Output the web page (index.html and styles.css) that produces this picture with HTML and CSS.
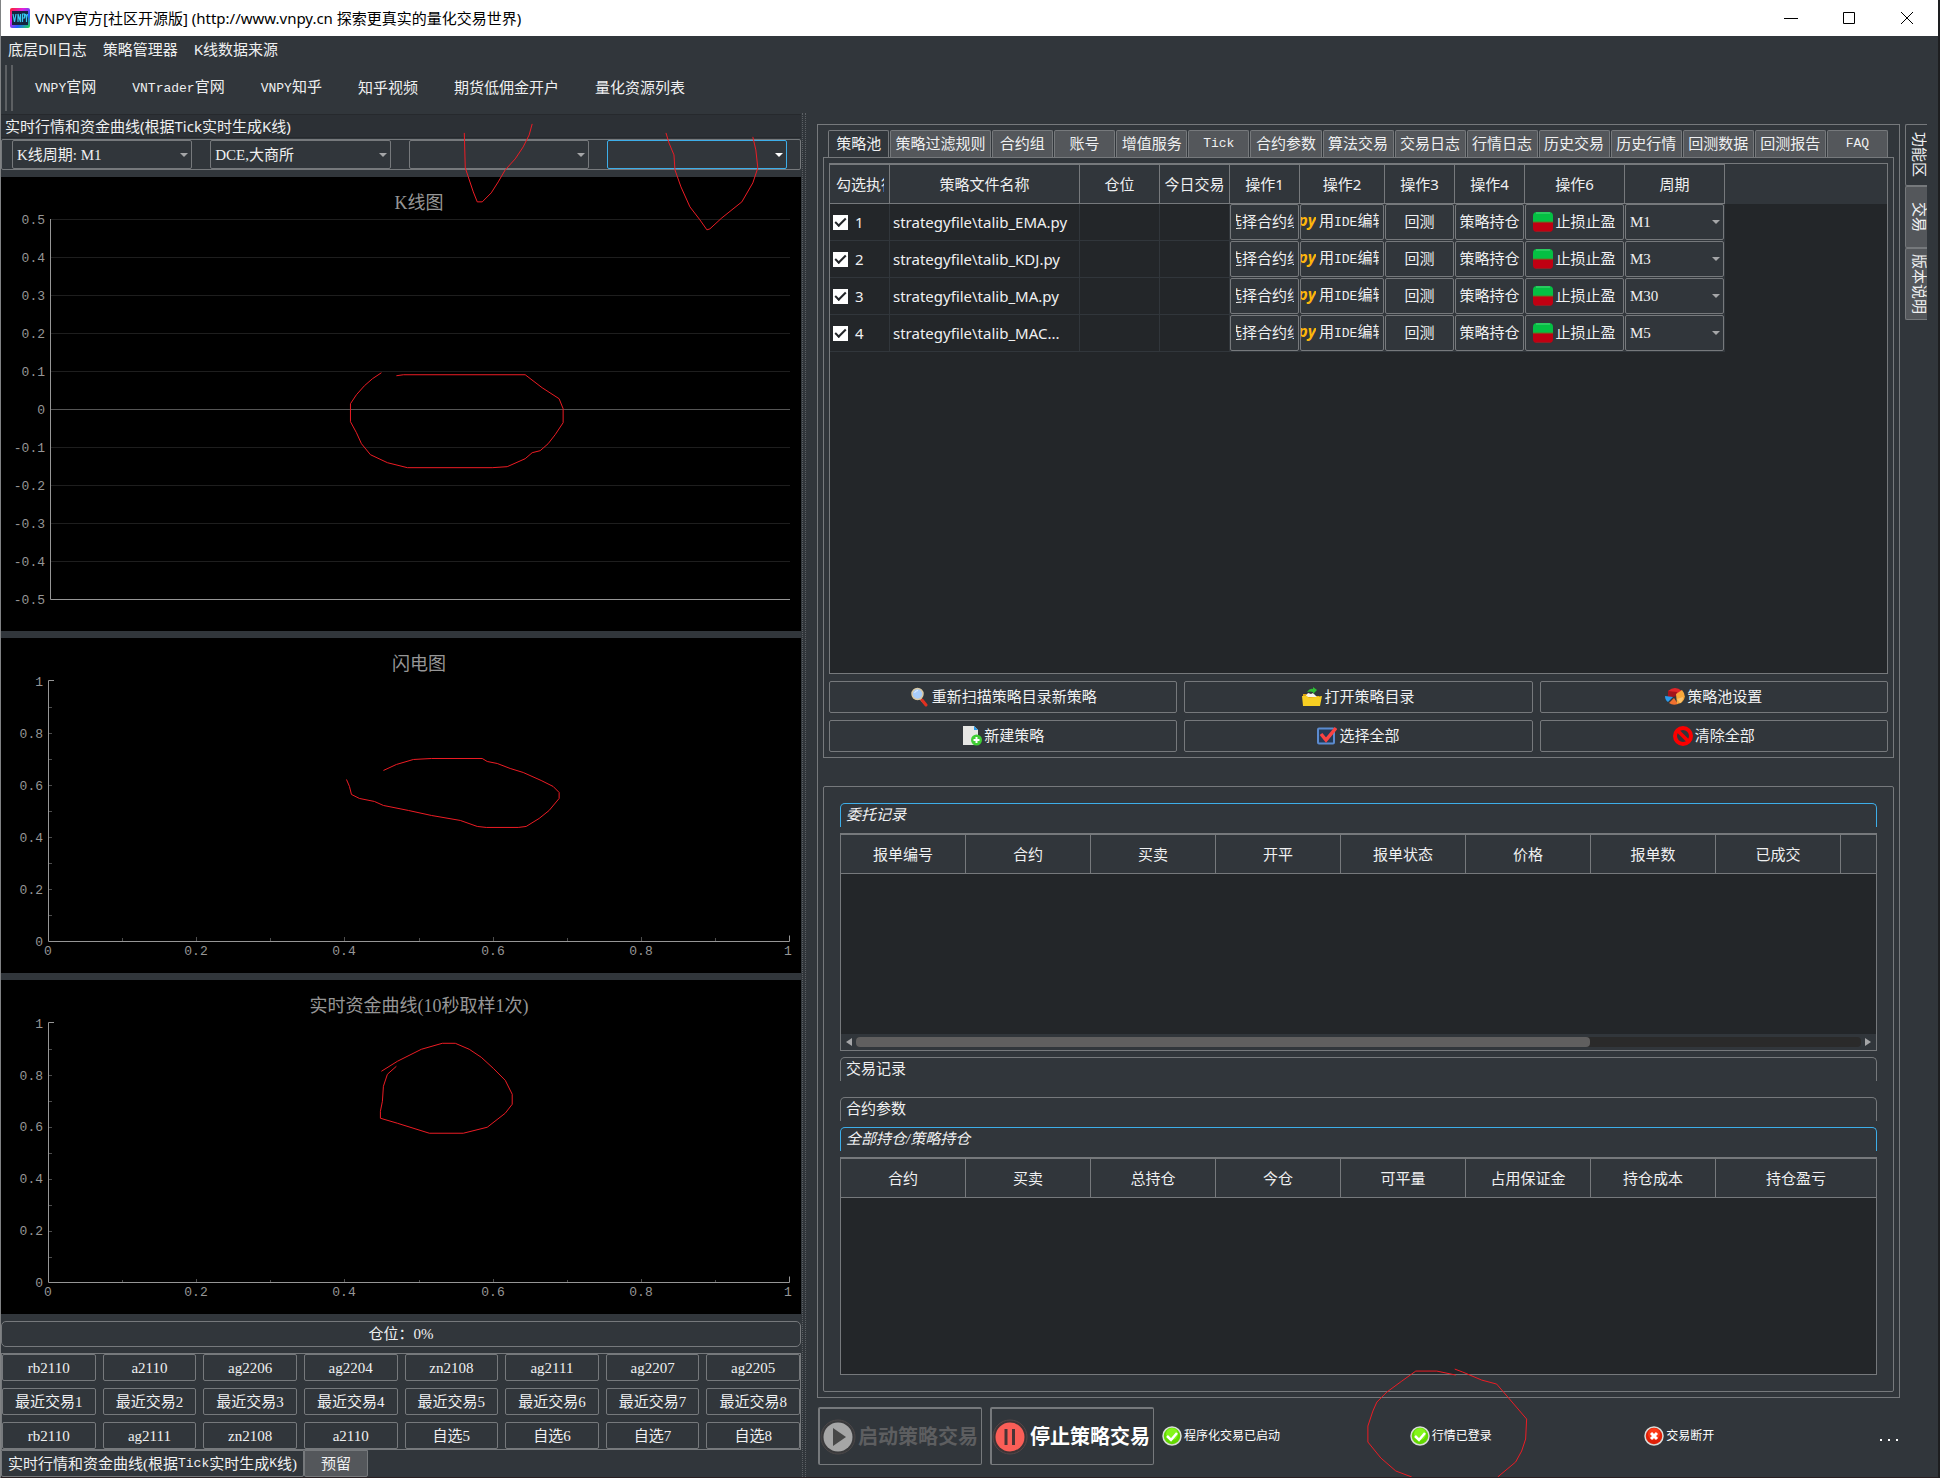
FILE: index.html
```html
<!DOCTYPE html>
<html lang="zh-CN">
<head>
<meta charset="utf-8">
<meta name="viewport" content="width=device-width, initial-scale=1">
<title>VNPY官方[社区开源版]</title>
<link rel="stylesheet" href="styles.css">
</head>
<body>
<svg class="sprite" aria-hidden="true">
  <symbol id="i-stop" viewBox="0 0 20 20"><path d="M4 0h12a4 4 0 0 1 4 4v6H0V4a4 4 0 0 1 4-4z" fill="#04c043"/><path d="M0 10h20v6a4 4 0 0 1-4 4H4a4 4 0 0 1-4-4z" fill="#c00012"/><path d="M3 1h14" stroke="#4fd47c"/><path d="M0 10h20" stroke="#5d7a25"/><path d="M3 19.500h14" stroke="#8b2026"/></symbol>
  <symbol id="i-search" viewBox="0 0 20 20"><path d="M10 11l3 4" stroke="#c9b58a" stroke-width="2"/><path d="M12 13l4 5" stroke="#e03020" stroke-width="3" stroke-linecap="round"/><circle cx="7.500" cy="7" r="5.500" fill="#a9cdfb" stroke="#d9c9a5" stroke-width="1.500"/><path d="M4.500 6q1-2.500 3.500-2.500" stroke="#e4f0ff" fill="none"/></symbol>
  <symbol id="i-folder" viewBox="0 0 20 20"><path d="M1 7h5l2 2h9v9H1z" fill="#e0a613"/><path d="M3 10l3-4 3 1 2-1 4 4z" fill="#f4f4ec"/><path d="M0 9h5l2 2 13-2-2 10H1z" fill="#f7cf22"/><path d="M5 5q3-4 6-3V0l4 3-4 4V5q-3-1-6 0z" fill="#2fbd35"/></symbol>
  <symbol id="i-pie" viewBox="0 0 20 20"><path d="M3 4q7-6 14 0l-5 4-9-1z" fill="#e0262a"/><path d="M3 4l9 1v4l-9 2z" fill="#a3141c"/><path d="M0 9l8 1-5 5q-3-2-3-6z" fill="#2a9bec"/><path d="M4 16l5-5 4 6q-5 2-9-1z" fill="#f0702f"/><path d="M11 7l6-4q6 7-1 13l-4 1z" fill="#f8a83c"/><path d="M12 12l6-2q0 4-3 6z" fill="#fcc36b"/></symbol>
  <symbol id="i-new" viewBox="0 0 20 20"><path d="M1 0h11l4 4v15H1z" fill="#e6e6e4"/><path d="M12 0l4 4h-4z" fill="#2a9bec"/><circle cx="14.500" cy="14" r="5.500" fill="#3fce34"/><path d="M14.500 11v6M11.500 14h6" stroke="#fff" stroke-width="2"/></symbol>
  <symbol id="i-all" viewBox="0 0 20 20"><rect x="1" y="2.500" width="16" height="15" rx="1" fill="#263a55" stroke="#5b8bd0" stroke-width="2"/><path d="M4 8l5 6L19 2" fill="none" stroke="#fb4342" stroke-width="3.500"/></symbol>
  <symbol id="i-ban" viewBox="0 0 20 20"><circle cx="10" cy="10" r="8" fill="none" stroke="#fb0000" stroke-width="4"/><path d="M4 4l12 12" stroke="#fb0000" stroke-width="3.500"/></symbol>
  <symbol id="i-ok" viewBox="0 0 20 20"><circle cx="10" cy="10" r="9" fill="#62d800" stroke="#d9dcd8" stroke-width="1.500"/><circle cx="10" cy="8" r="6" fill="#84f51a"/><path d="M5 10l4 4 6-7" fill="none" stroke="#fff" stroke-width="2.500"/></symbol>
  <symbol id="i-bad" viewBox="0 0 20 20"><circle cx="10" cy="10" r="9" fill="#e02008" stroke="#d9dcd8" stroke-width="1.500"/><circle cx="10" cy="8" r="6" fill="#fb3a17"/><path d="M7 7l6 6M13 7l-6 6" stroke="#fff" stroke-width="3"/></symbol>
  <symbol id="i-play" viewBox="0 0 36 36"><circle cx="18" cy="18" r="17" fill="#3a3a3c" stroke="#4c4849"/><circle cx="18" cy="18" r="14.500" fill="#a6a6a6"/><path d="M13 9l13 9-13 9z" fill="#484848"/></symbol>
  <symbol id="i-pause" viewBox="0 0 36 36"><circle cx="18" cy="18" r="17" fill="#3d3436" stroke="#54484a"/><circle cx="18" cy="18" r="14.500" fill="#fb5e57"/><path d="M14 10v16M21.500 10v16" stroke="#4a3436" stroke-width="3"/></symbol>
</svg>
<div class="app">
  <header class="titlebar">
    <svg class="logo" viewBox="0 0 20 20"><defs><linearGradient id="lg" x1="0" y1="0" x2="1" y2="1"><stop offset="0" stop-color="#ff2020"/><stop offset=".35" stop-color="#e020e0"/><stop offset=".65" stop-color="#2060ff"/><stop offset="1" stop-color="#20e040"/></linearGradient></defs><rect width="20" height="20" rx="2" fill="url(#lg)"/><rect x="2" y="3" width="16" height="14" fill="#142440"/><path d="M3 6l1.500 8L6 6M8 14V6l2.500 8V6M12.500 14V6h2v4h-2M15.500 6l1 4 1-4M16.500 10v4" fill="none" stroke="#37c8f0" stroke-width="1.200"/></svg>
    <h1>VNPY官方[社区开源版] (http://www.vnpy.cn 探索更真实的量化交易世界)</h1>
    <div class="winbtns">
      <button type="button" aria-label="最小化"><svg viewBox="0 0 14 14"><path d="M0 7.500h14"/></svg></button>
      <button type="button" aria-label="最大化"><svg viewBox="0 0 14 14"><path d="M1.500 1.500h11v11h-11z"/></svg></button>
      <button type="button" aria-label="关闭"><svg viewBox="0 0 14 14"><path d="M1 1l12 12M13 1L1 13"/></svg></button>
    </div>
  </header>
  <nav class="menubar"><a href="#">底层Dll日志</a><a href="#">策略管理器</a><a href="#">K线数据来源</a></nav>
  <nav class="toolbar"><i class="grip"></i><a href="#"><span class="m">VNPY</span>官网</a><a href="#"><span class="m">VNTrader</span>官网</a><a href="#"><span class="m">VNPY</span>知乎</a><a href="#">知乎视频</a><a href="#">期货低佣金开户</a><a href="#">量化资源列表</a></nav>

  <main class="main">
    <section class="left">
      <h2 class="dock-title">实时行情和资金曲线(根据Tick实时生成K线)</h2>
      <div class="combos">
        <span class="combo"><select aria-label="K线周期"><option>K线周期: M1</option></select></span>
        <span class="combo"><select aria-label="交易所"><option>DCE,大商所</option></select></span>
        <span class="combo"><select aria-label="品种"><option></option></select></span>
        <span class="combo focus"><select aria-label="合约"><option></option></select></span>
      </div>
      <svg class="chart" viewBox="0 0 800 454">
        <g class="grid"><path d="M50 42.500h739M50 80.500h739M50 118.500h739M50 156.500h739M50 194.500h739M50 270.500h739M50 308.500h739M50 346.500h739M50 384.500h739"/></g>
        <path class="zero" d="M50 232.500h739"/>
        <path class="axis" d="M49.500 42v380.500H789"/>
        <text class="ct" x="418" y="32">K线图</text>
        <g class="yl"><text x="44" y="47">0.5</text><text x="44" y="85">0.4</text><text x="44" y="123">0.3</text><text x="44" y="161">0.2</text><text x="44" y="199">0.1</text><text x="44" y="237">0</text><text x="44" y="275">-0.1</text><text x="44" y="313">-0.2</text><text x="44" y="351">-0.3</text><text x="44" y="389">-0.4</text><text x="44" y="427">-0.5</text></g>
      </svg>
      <svg class="chart" viewBox="0 0 800 335">
        <path class="tick" d="M47 69.500h4M47 95.500h4M47 121.500h4M47 147.500h4M47 173.500h4M47 199.500h4M47 225.500h4M47 251.500h4M47 277.500h4M121.500 303v-3M195.500 303v-4M269.500 303v-3M343.500 303v-4M418.500 303v-3M492.500 303v-4M566.500 303v-3M640.500 303v-4M714.500 303v-3"/>
        <path class="axis" d="M53 42.500h-5.500v261H788.500v-6"/>
        <text class="ct" x="418" y="32">闪电图</text>
        <g class="yl"><text x="42" y="48">1</text><text x="42" y="100">0.8</text><text x="42" y="152">0.6</text><text x="42" y="204">0.4</text><text x="42" y="256">0.2</text><text x="42" y="308">0</text></g>
        <g class="xl"><text x="47" y="317">0</text><text x="195" y="317">0.2</text><text x="343" y="317">0.4</text><text x="492" y="317">0.6</text><text x="640" y="317">0.8</text><text x="787" y="317">1</text></g>
      </svg>
      <svg class="chart" viewBox="0 0 800 334">
        <path class="tick" d="M47 69.500h4M47 95.500h4M47 121.500h4M47 147.500h4M47 173.500h4M47 199.500h4M47 225.500h4M47 251.500h4M47 277.500h4M121.500 303v-3M195.500 303v-4M269.500 303v-3M343.500 303v-4M418.500 303v-3M492.500 303v-4M566.500 303v-3M640.500 303v-4M714.500 303v-3"/>
        <path class="axis" d="M53 42.500h-5.500v260H788.500v-6"/>
        <text class="ct" x="418" y="32">实时资金曲线(10秒取样1次)</text>
        <g class="yl"><text x="42" y="48">1</text><text x="42" y="100">0.8</text><text x="42" y="151">0.6</text><text x="42" y="203">0.4</text><text x="42" y="255">0.2</text><text x="42" y="307">0</text></g>
        <g class="xl"><text x="47" y="316">0</text><text x="195" y="316">0.2</text><text x="343" y="316">0.4</text><text x="492" y="316">0.6</text><text x="640" y="316">0.8</text><text x="787" y="316">1</text></g>
      </svg>
      <div class="progress">仓位：0%</div>
      <div class="quick">
        <button type="button">rb2110</button><button type="button">a2110</button><button type="button">ag2206</button><button type="button">ag2204</button><button type="button">zn2108</button><button type="button">ag2111</button><button type="button">ag2207</button><button type="button">ag2205</button>
        <button type="button">最近交易1</button><button type="button">最近交易2</button><button type="button">最近交易3</button><button type="button">最近交易4</button><button type="button">最近交易5</button><button type="button">最近交易6</button><button type="button">最近交易7</button><button type="button">最近交易8</button>
        <button type="button">rb2110</button><button type="button">ag2111</button><button type="button">zn2108</button><button type="button">a2110</button><button type="button">自选5</button><button type="button">自选6</button><button type="button">自选7</button><button type="button">自选8</button>
      </div>
      <div class="btabs"><button type="button" class="on">实时行情和资金曲线(根据<span class="m">Tick</span>实时生成<span class="m">K</span>线)</button><button type="button">预留</button></div>
    </section>
    <div class="splitter"></div>

    <section class="right">
      <div class="work">
        <div class="panel">
          <div class="tabs">
            <button type="button" class="on">策略池</button><button type="button" class="w100">策略过滤规则</button><button type="button">合约组</button><button type="button">账号</button><button type="button" class="w70">增值服务</button><button type="button"><span class="m">Tick</span></button><button type="button" class="w70">合约参数</button><button type="button" class="w70">算法交易</button><button type="button" class="w70">交易日志</button><button type="button" class="w70">行情日志</button><button type="button" class="w70">历史交易</button><button type="button" class="w70">历史行情</button><button type="button" class="w70">回测数据</button><button type="button" class="w70">回测报告</button><button type="button"><span class="m">FAQ</span></button>
          </div>
          <div class="pane">
            <div class="tablebox">
              <table class="pool">
                <colgroup><col class="c60"><col class="c190"><col class="c80"><col class="c70"><col class="c70"><col class="c85"><col class="c70"><col class="c70"><col class="c100"><col class="c100"><col></colgroup>
                <thead><tr><th><span class="clip left-clip">勾选执行</span></th><th>策略文件名称</th><th>仓位</th><th>今日交易</th><th>操作1</th><th>操作2</th><th>操作3</th><th>操作4</th><th>操作6</th><th>周期</th><th class="fill"></th></tr></thead>
                <tbody>
                  <tr><td><label class="chk"><input type="checkbox" checked>1</label></td><td class="name">strategyfile\talib_EMA.py</td><td></td><td></td><td class="op"><button type="button"><span class="clip">选择合约组</span></button></td><td class="op"><button type="button" class="ide"><b>py</b><span>用<span class="m">IDE</span>编辑</span></button></td><td class="op"><button type="button">回测</button></td><td class="op"><button type="button">策略持仓</button></td><td class="op"><button type="button"><svg class="ic"><use href="#i-stop"/></svg>止损止盈</button></td><td class="op"><span class="combo"><select aria-label="周期 1"><option>M1</option></select></span></td><td class="fill"></td></tr>
                  <tr><td><label class="chk"><input type="checkbox" checked>2</label></td><td class="name">strategyfile\talib_KDJ.py</td><td></td><td></td><td class="op"><button type="button"><span class="clip">选择合约组</span></button></td><td class="op"><button type="button" class="ide"><b>py</b><span>用<span class="m">IDE</span>编辑</span></button></td><td class="op"><button type="button">回测</button></td><td class="op"><button type="button">策略持仓</button></td><td class="op"><button type="button"><svg class="ic"><use href="#i-stop"/></svg>止损止盈</button></td><td class="op"><span class="combo"><select aria-label="周期 2"><option>M3</option></select></span></td><td class="fill"></td></tr>
                  <tr><td><label class="chk"><input type="checkbox" checked>3</label></td><td class="name">strategyfile\talib_MA.py</td><td></td><td></td><td class="op"><button type="button"><span class="clip">选择合约组</span></button></td><td class="op"><button type="button" class="ide"><b>py</b><span>用<span class="m">IDE</span>编辑</span></button></td><td class="op"><button type="button">回测</button></td><td class="op"><button type="button">策略持仓</button></td><td class="op"><button type="button"><svg class="ic"><use href="#i-stop"/></svg>止损止盈</button></td><td class="op"><span class="combo"><select aria-label="周期 3"><option>M30</option></select></span></td><td class="fill"></td></tr>
                  <tr><td><label class="chk"><input type="checkbox" checked>4</label></td><td class="name">strategyfile\talib_MAC...</td><td></td><td></td><td class="op"><button type="button"><span class="clip">选择合约组</span></button></td><td class="op"><button type="button" class="ide"><b>py</b><span>用<span class="m">IDE</span>编辑</span></button></td><td class="op"><button type="button">回测</button></td><td class="op"><button type="button">策略持仓</button></td><td class="op"><button type="button"><svg class="ic"><use href="#i-stop"/></svg>止损止盈</button></td><td class="op"><span class="combo"><select aria-label="周期 4"><option>M5</option></select></span></td><td class="fill"></td></tr>
                </tbody>
              </table>
            </div>
            <div class="actions">
              <button type="button"><svg class="ic"><use href="#i-search"/></svg>重新扫描策略目录新策略</button>
              <button type="button"><svg class="ic"><use href="#i-folder"/></svg>打开策略目录</button>
              <button type="button"><svg class="ic"><use href="#i-pie"/></svg>策略池设置</button>
              <button type="button"><svg class="ic"><use href="#i-new"/></svg>新建策略</button>
              <button type="button"><svg class="ic"><use href="#i-all"/></svg>选择全部</button>
              <button type="button"><svg class="ic"><use href="#i-ban"/></svg>清除全部</button>
            </div>
          </div>
          <div class="records">
            <h3 class="bar on">委托记录</h3>
            <div class="tablebox">
              <table class="rec"><colgroup><col><col><col><col><col><col><col><col><col class="rest"></colgroup><thead><tr><th>报单编号</th><th>合约</th><th>买卖</th><th>开平</th><th>报单状态</th><th>价格</th><th>报单数</th><th>已成交</th><th></th></tr></thead></table>
              <div class="hscroll"><i class="arr l"></i><div class="trough"><div class="thumb"></div></div><i class="arr r"></i></div>
            </div>
            <h3 class="bar">交易记录</h3>
            <h3 class="bar far">合约参数</h3>
            <h3 class="bar on">全部持仓/策略持仓</h3>
            <div class="tablebox">
              <table class="rec"><colgroup><col><col><col><col><col><col><col><col class="rest"></colgroup><thead><tr><th>合约</th><th>买卖</th><th>总持仓</th><th>今仓</th><th>可平量</th><th>占用保证金</th><th>持仓成本</th><th>持仓盈亏</th></tr></thead></table>
            </div>
          </div>
        </div>
        <footer class="status">
          <button type="button" class="big" disabled><svg><use href="#i-play"/></svg>启动策略交易</button>
          <button type="button" class="big"><svg><use href="#i-pause"/></svg>停止策略交易</button>
          <div class="states">
            <span><svg class="ic"><use href="#i-ok"/></svg>程序化交易已启动</span>
            <span><svg class="ic"><use href="#i-ok"/></svg>行情已登录</span>
            <span><svg class="ic"><use href="#i-bad"/></svg>交易断开</span>
            <span class="dots"><i></i><i></i><i></i></span>
          </div>
        </footer>
      </div>
      <div class="vtabs"><button type="button" class="on">功能区</button><button type="button">交易</button><button type="button" class="tall">版本说明</button></div>
    </section>
  </main>

  <svg class="ink" viewBox="0 0 1940 1478" preserveAspectRatio="none" aria-hidden="true">
    <path d="M464 133L465 168 473 192 477 202H482L491 193 498 182 505 170 515 159 523 147 529 135 532 124"/>
    <path d="M666 133L669 143 674 155 675 170 681 187 690 207 700 220 707 230 710 229 722 218 742 202 753 183 758 168 756 150 753 137"/>
    <path d="M381 373L372 379 364 386 356 395 350 404V422L356 433 361 444 370 455 387 463 407 468H492L507 467 525 459 532 453 540 451 548 444 555 435 563 423V409L559 399 542 388 525 375H403L396 376"/>
    <path d="M383 771L396 765 413 760 431 759H482L487 762 497 764 510 769 523 773 541 781 553 787 559 793V799L549 811 539 819 526 827 518 828H486L477 827 460 821 431 816 408 811 383 806 374 802 359 799 351 795 349 787 346 780"/>
    <path d="M396 1067L387 1075 383 1087 382 1102 380 1112V1119L397 1124 429 1134H463L487 1128 505 1114 512 1105V1095L505 1081 493 1069 481 1058 469 1050 455 1044H442L421 1050 397 1062 381 1072"/>
    <path d="M1413 1478L1397 1472 1382 1459 1369 1443V1427L1374 1412 1378 1403 1388 1393 1403 1382 1417 1372H1438L1457 1376M1456 1370L1464 1373 1483 1381 1498 1385 1510 1399 1528 1420 1527 1440 1523 1452 1517 1463 1499 1478"/>
  </svg>
</div>
</body>
</html>
```
FILE: styles.css
```css
:root {
  --bg: #31363b;
  --dark: #232629;
  --line: #76797c;
  --tab: #54575b;
  --text: #eff0f1;
  --blue: #3daee9;
  --ui: "Noto Sans", "Noto Sans CJK SC", sans-serif;
  --song: "Liberation Serif", "Noto Sans CJK SC", serif;
}
* { box-sizing: border-box; }
body { margin: 0; background: var(--bg); color: var(--text); font: 15px/20px var(--song); }
button, select, input { font: inherit; color: inherit; margin: 0; }
button { display: flex; align-items: center; justify-content: center; padding: 0; background: var(--bg); border: 1px solid var(--line); border-radius: 2px; white-space: nowrap; overflow: hidden; }
a { color: inherit; text-decoration: none; }
h1, h2, h3 { margin: 0; font-weight: 400; font-size: 15px; }
.sprite { display: none; }
.m { font-family: "Liberation Mono", monospace; font-size: 13px; }
.ic { width: 20px; height: 20px; margin-right: 2px; flex: none; }

.app { position: relative; display: flex; flex-direction: column; min-height: 100vh; border-left: 1px solid #808284; border-right: 2px solid #1d1e20; border-bottom: 2px solid #2a2022; }
.titlebar { display: flex; align-items: center; height: 36px; background: #fff; color: #000; padding: 0 2px 0 9px; font-family: var(--ui); }
.logo { width: 20px; height: 20px; margin-right: 5px; }
.winbtns { display: flex; margin-left: auto; }
.winbtns button { width: 58px; height: 34px; background: none; border: 0; }
.winbtns svg { width: 14px; height: 14px; fill: none; stroke: #000; }
.menubar { display: flex; gap: 16px; height: 27px; padding: 3px 7px; font-family: var(--ui); }
.toolbar { display: flex; align-items: center; gap: 36px; height: 50px; padding: 0 4px; }
.grip { width: 8px; height: 46px; margin-right: -14px; border: solid #5d6063; border-width: 0 2px; }

.main { flex: 1; display: grid; grid-template-columns: minmax(0, 800fr) 6px minmax(0, 1131fr); }
.left { display: flex; flex-direction: column; }
.dock-title { height: 24px; margin: 1px 0; padding: 0 4px; background: #2c3035; border: solid #26292d; border-width: 1px 0; line-height: 22px; font-family: var(--ui); }
.combos { display: grid; grid-template-columns: repeat(4, 1fr); gap: 18px; height: 31px; margin-bottom: 7px; padding: 0 13px 0 10px; border: 1px solid var(--line); border-radius: 2px; }
.combo { position: relative; display: block; }
.combo select { appearance: none; width: 100%; height: 100%; padding: 0 4px; background: var(--bg); border: 1px solid var(--line); border-radius: 2px; }
.combo::after { content: ""; position: absolute; right: 4px; top: 50%; margin-top: -2px; border: 4px solid transparent; border-top: 4px solid #a5a6a8; border-bottom: 0; }
.combo.focus select { border-color: var(--blue); }
.combo.focus::after { border-top-color: #fff; }

.chart { display: block; width: 100%; height: auto; margin-bottom: 7px; background: #000; }
.grid path { stroke: #1e1e1e; }
.zero { stroke: #555; }
.axis { fill: none; stroke: #969696; }
.tick { stroke: #4c4c4c; }
.chart text { fill: #969696; font: 13px "Liberation Mono", monospace; }
.chart .ct { font: 18px var(--song); text-anchor: middle; }
.yl text { text-anchor: end; }
.xl text { text-anchor: middle; }

.progress { height: 26px; margin: 0 0 6px; border: 1px solid var(--line); border-radius: 5px; text-align: center; line-height: 24px; }
.quick { display: grid; grid-template-columns: repeat(8, 1fr); gap: 7px; border: 1px solid var(--line); }
.quick button { height: 27px; }
.btabs { display: flex; }
.btabs button { height: 27px; padding: 0 6px; border-radius: 0 0 2px 2px; }
.btabs button + button { padding: 0 16px; background: var(--tab); }
.splitter { border: dotted #5c6064; border-width: 0 1px; margin: 0 1px; }

.right { display: flex; gap: 5px; padding: 11px 11px 0 10px; }
.work { flex: 1; min-width: 0; display: flex; flex-direction: column; }
.panel { flex: 1; display: flex; flex-direction: column; padding: 5px; border: 1px solid var(--line); }
.tabs { display: flex; gap: 1px; padding: 0 6px 0 5px; }
.tabs button { flex: 61 1 0; height: 27px; border-radius: 2px 2px 0 0; background: var(--tab); border-bottom: 0; }
.tabs .w70 { flex-grow: 71; }
.tabs .w100 { flex-grow: 101; }
.tabs .on, .vtabs .on, .btabs .on { background: var(--bg); }
.pane { flex: 589 1 0; display: flex; flex-direction: column; padding: 5px; border: 1px solid var(--line); }
.tablebox { flex: 1; display: flex; flex-direction: column; background: var(--dark); border: 1px solid var(--line); overflow: hidden; }
table { width: 100%; table-layout: fixed; border-collapse: separate; border-spacing: 0; font-family: var(--ui); }
th { height: 40px; padding: 0; font-weight: 400; background: var(--bg); border: solid var(--line); border-width: 1px 1px 1px 0; }
th:last-child, td:last-child { border-right: 0; }
th.fill { border-color: var(--bg); }
td { height: 37px; padding: 0; border: solid var(--bg); border-width: 0 1px 1px 0; }
td.fill { border: 0; }
.c60 { width: 60px; } .c70 { width: 70px; } .c80 { width: 80px; } .c85 { width: 85px; } .c100 { width: 100px; } .c190 { width: 190px; }
.clip { display: flex; justify-content: center; width: 58px; overflow: hidden; white-space: nowrap; }
.left-clip { justify-content: flex-start; width: 48px; margin-left: 6px; }
.chk { display: flex; align-items: center; gap: 7px; padding-left: 3px; }
.chk input { appearance: none; width: 15px; height: 15px; background: #fff; display: grid; place-items: center; }
.chk input::after { content: ""; width: 9px; height: 4px; margin-top: -3px; border: solid #232629; border-width: 0 0 2px 2px; rotate: -45deg; }
.name { padding-left: 3px; white-space: nowrap; overflow: hidden; }
.op { font-family: var(--song); background: var(--bg); }
.op button, .op .combo { width: 100%; height: 36px; }
.op .ide { justify-content: flex-start; }
.ide b { width: 15px; margin: 0 3px 4px 0; flex: none; display: flex; justify-content: flex-end; overflow: hidden; color: #fdb60b; font: italic bold 16px/20px "Open Sans", sans-serif; }
.ide > span { width: 60px; overflow: hidden; }
.actions { display: grid; grid-template-columns: repeat(3, 1fr); gap: 7px; padding-top: 7px; }
.actions button { height: 32px; }

.records { flex: 572 1 0; display: flex; flex-direction: column; margin-top: 28px; padding: 16px; border: 1px solid var(--line); border-radius: 2px; }
.bar { height: 24px; padding: 1px 5px; margin-bottom: 6px; border: 1px solid var(--line); border-bottom: 0; border-radius: 5px 5px 0 0; }
.bar.on { border-color: var(--blue); font-style: italic; }
.bar.far { margin-top: 10px; }
.tablebox + .bar { margin-top: 6px; }
.rec col { width: 125px; }
.rec .rest { width: auto; }
.hscroll { display: flex; align-items: center; gap: 4px; height: 16px; margin-top: auto; padding: 0 5px; background: var(--bg); }
.trough { flex: 1; height: 10px; border-radius: 4px; background: #2a2a2a; }
.thumb { width: 73%; height: 10px; border-radius: 4px; background: #605f5f; }
.arr { border: 4px solid transparent; }
.arr.l { border-right: 6px solid #a5a6a8; border-left: 0; }
.arr.r { border-left: 6px solid #a5a6a8; border-right: 0; }

.status { display: flex; align-items: center; gap: 8px; height: 79px; padding: 0 0 3px 1px; }
.big { width: 164px; height: 58px; gap: 2px; padding-right: 3px; border-width: 2px 1px 1px 2px; font: bold 20px/24px var(--ui); color: #fff; }
.big svg { width: 36px; height: 36px; flex: none; }
.big:disabled { color: #5d5e60; }
.states { flex: 1; display: grid; grid-template-columns: 248fr 235fr 236fr 20px; font-size: 12px; color: #fff; }
.states > span { display: flex; align-items: center; }
.dots { gap: 6px; padding-top: 8px; }
.dots i { width: 2px; height: 2px; background: #fff; }
.vtabs { width: 22px; }
.vtabs button { width: 22px; height: 62px; padding-left: 4px; writing-mode: vertical-rl; text-orientation: sideways; background: var(--tab); border-right: 0; border-radius: 2px 0 0 2px; }
.vtabs .tall { height: 72px; }
.ink { position: absolute; inset: 0; width: 100%; height: 100%; pointer-events: none; fill: none; stroke: #ed1c24; stroke-width: 1; }
```
